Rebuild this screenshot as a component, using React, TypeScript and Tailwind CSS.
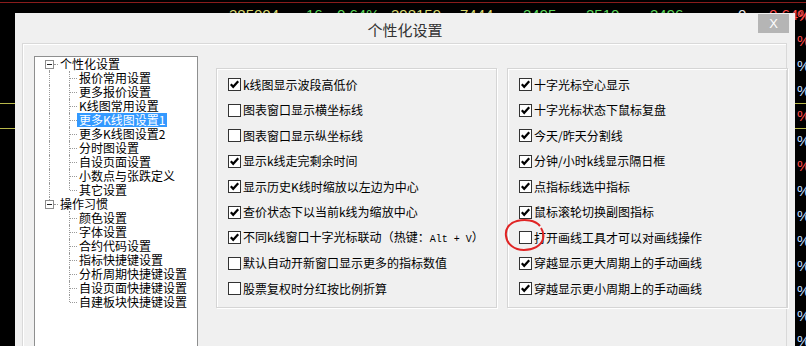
import React from "react";

const cjk = "font-['Noto_Sans_CJK_SC','Liberation_Sans',sans-serif]";

const tree = [
  {
    label: "个性化设置",
    children: [
      "报价常用设置",
      "更多报价设置",
      "K线图常用设置",
      "更多K线图设置1",
      "更多K线图设置2",
      "分时图设置",
      "自设页面设置",
      "小数点与张跌定义",
      "其它设置",
    ],
  },
  {
    label: "操作习惯",
    children: [
      "颜色设置",
      "字体设置",
      "合约代码设置",
      "指标快捷键设置",
      "分析周期快捷键设置",
      "自设页面快捷键设置",
      "自建板块快捷键设置",
    ],
  },
];

const selected = "更多K线图设置1";

const leftOptions: { label: React.ReactNode; checked: boolean }[] = [
  { label: "k线图显示波段高低价", checked: true },
  { label: "图表窗口显示横坐标线", checked: false },
  { label: "图表窗口显示纵坐标线", checked: false },
  { label: "显示k线走完剩余时间", checked: true },
  { label: "显示历史K线时缩放以左边为中心", checked: true },
  { label: "查价状态下以当前k线为缩放中心", checked: true },
  {
    label: (
      <>
        不同k线窗口十字光标联动（热键：
        <span className="font-['Liberation_Mono',monospace] text-[10px]">Alt + V</span>）
      </>
    ),
    checked: true,
  },
  { label: "默认自动开新窗口显示更多的指标数值", checked: false },
  { label: "股票复权时分红按比例折算", checked: false },
];

const rightOptions = [
  { label: "十字光标空心显示", checked: true },
  { label: "十字光标状态下鼠标复盘", checked: true },
  { label: "今天/昨天分割线", checked: true },
  { label: "分钟/小时k线显示隔日框", checked: true },
  { label: "点指标线选中指标", checked: true },
  { label: "鼠标滚轮切换副图指标", checked: true },
  { label: "打开画线工具才可以对画线操作", checked: false },
  { label: "穿越显示更大周期上的手动画线", checked: true },
  { label: "穿越显示更小周期上的手动画线", checked: true },
];

// quote table row peeking out above the dialog
const quoteCells = [
  { text: "385004", cls: "w-[77px] text-[#d8d870]" },
  { text: "16", cls: "w-[31px] text-[#5cd65c]" },
  { text: "0.64%", cls: "w-[54px] text-[#5cd65c]" },
  { text: "398159", cls: "w-[69px] text-[#d8d870]" },
  { text: "7444", cls: "w-[63px] text-[#d8d870]" },
  { text: "2495", cls: "w-[63px] text-[#5cd65c]" },
  { text: "2510", cls: "w-[64px] text-[#5cd65c]" },
  { text: "2496", cls: "w-[88px] text-[#5cd65c]" },
  { text: "0", cls: "w-[31px] text-[#e8e8e8]" },
  { text: "0.64%", cls: "text-[#ff4a4a]" },
];

const percentRows = [
  "red", "red", "blue", "blue", "red", "blue", "red",
  "blue", "blue", "blue", "blue", "blue", "blue", "blue",
];

const CheckBox = ({ checked }: { checked: boolean }) => (
  <span className="flex h-[13px] w-[13px] shrink-0 items-center justify-center border border-[#333] bg-white">
    {checked && (
      <svg width="11" height="11" viewBox="0 0 11 11">
        <path d="M1.8 5.2 L4.2 7.8 L9.2 2.2" stroke="#000" strokeWidth="2.2" fill="none" />
      </svg>
    )}
  </span>
);

const OptionGroup = ({
  options,
}: {
  options: { label: React.ReactNode; checked: boolean }[];
}) => (
  <div className="h-[240px] w-[281px] border border-[#d5d5d5] pl-[11px] pt-[3px] shadow-[inset_1px_1px_0_#fff,1px_1px_0_#fff]">
    {options.map((o, i) => (
      <div key={i} className="flex h-[25.5px] items-center gap-[2px]">
        <CheckBox checked={o.checked} />
        <span className="whitespace-nowrap text-[12px] leading-none text-black">{o.label}</span>
      </div>
    ))}
  </div>
);

const dotV = "absolute w-0 border-l border-dotted border-[#9a9a9a]";
const dotH = "absolute h-0 border-t border-dotted border-[#9a9a9a]";

const TreeView = () => (
  <div className="h-[300px] w-[164px] shrink-0 border border-[#8e8f8f] bg-white">
    {tree.map((root, ri) => {
      const isFirst = ri === 0;
      const isLast = ri === tree.length - 1;
      return (
        <div key={root.label}>
          {/* root row */}
          <div className="flex h-[14px] items-center">
            <div className="relative h-full w-[23px] shrink-0">
              {!isFirst && <span className={`${dotV} left-[14px] top-0 h-[7px]`} />}
              {!isLast && <span className={`${dotV} left-[14px] top-[7px] h-[7px]`} />}
              <span className={`${dotH} left-[19px] top-[7px] w-[4px]`} />
              <span className="absolute left-[10px] top-[3px] flex h-[9px] w-[9px] items-center justify-center border border-[#8c8c8c] bg-white">
                <span className="h-px w-[5px] bg-[#222]" />
              </span>
            </div>
            <span className="px-[2px] text-[12px] leading-none text-black">{root.label}</span>
          </div>
          {/* children */}
          {root.children.map((c, ci) => {
            const lastChild = ci === root.children.length - 1;
            const sel = c === selected;
            return (
              <div key={c} className="flex h-[14px] items-center">
                <div className="relative h-full w-[20px] shrink-0">
                  {!isLast && <span className={`${dotV} left-[14px] top-0 h-[14px]`} />}
                </div>
                <div className="relative h-full w-[22px] shrink-0">
                  <span className={`${dotV} left-[14px] top-0 ${lastChild ? "h-[7px]" : "h-[14px]"}`} />
                  <span className={`${dotH} left-[15px] top-[7px] w-[7px]`} />
                </div>
                <span
                  className={`whitespace-nowrap px-[2px] py-[1px] text-[12px] leading-none ${
                    sel ? "bg-[#3399ff] text-white" : "text-black"
                  }`}
                >
                  {c}
                </span>
              </div>
            );
          })}
        </div>
      );
    })}
  </div>
);

export default function App() {
  return (
    <div className={`relative h-[346px] w-[806px] overflow-hidden bg-black ${cjk}`}>
      {/* desktop (quote screen) behind the dialog */}
      <div className="flex h-full flex-col">
        <div className="mt-[2px] h-px w-full bg-[#8a1c1c]" />
        <div className="ml-[229px] mt-[4px] flex font-['Liberation_Sans',sans-serif] text-[15px] leading-[15px]">
          {quoteCells.map((q, i) => (
            <span key={i} className={`shrink-0 ${q.cls}`}>
              {q.text}
            </span>
          ))}
        </div>
        <div className="mt-[81px] flex h-[26px] flex-col justify-between">
          <div className="flex justify-between">
            <div className="h-px w-[15px] bg-[#b8b84a]" />
            <div className="h-px w-[11px] bg-[#b8b84a]" />
          </div>
          <div className="flex justify-between">
            <div className="h-px w-[15px] bg-[#b8b84a]" />
            <div className="h-px w-[11px] bg-[#b8b84a]" />
          </div>
        </div>
      </div>
      <div className="absolute left-[797px] top-[3px] flex flex-col font-['Liberation_Sans',sans-serif] text-[15px] leading-[25px]">
        {percentRows.map((c, i) => (
          <span key={i} className={c === "red" ? "text-[#ff4a4a]" : "text-[#bcdcff]"}>
            %
          </span>
        ))}
      </div>

      {/* dialog window */}
      <div className="absolute left-[15px] top-[13px] flex h-[340px] w-[780px] flex-col bg-[#f0f0f0]">
        <div className="relative flex h-[30px] shrink-0 items-center justify-center pt-[2px]">
          <span className="text-[15px] leading-none text-[#333]">个性化设置</span>
          <span className="absolute right-[6px] top-[1px] flex h-[19px] w-[31px] items-center justify-center bg-[#b5b5b5] font-['Liberation_Sans',sans-serif] text-[13px] text-white">
            X
          </span>
        </div>
        <div className="ml-[7px] mr-[8px] flex flex-1 border-l border-r border-t border-[#d9d9d9] pl-[11px] pt-[12px] shadow-[inset_1px_1px_0_#fff]">
          <TreeView />
          <div className="ml-[18px] mt-[12px] flex gap-[10px]">
            <OptionGroup options={leftOptions} />
            <OptionGroup options={rightOptions} />
          </div>
        </div>
      </div>

      {/* red annotation circle */}
      <svg className="absolute left-[503px] top-[218px]" width="46" height="36" viewBox="0 0 46 36">
        <path
          d="M37 8 C32 2 22 1 14 3 C6 5 2 11 3 18 C4 26 11 32 21 32 C30 32 38 28 40 21 C41 17 40 13 38 10"
          stroke="#e02424"
          strokeWidth="2"
          fill="none"
        />
      </svg>
    </div>
  );
}
